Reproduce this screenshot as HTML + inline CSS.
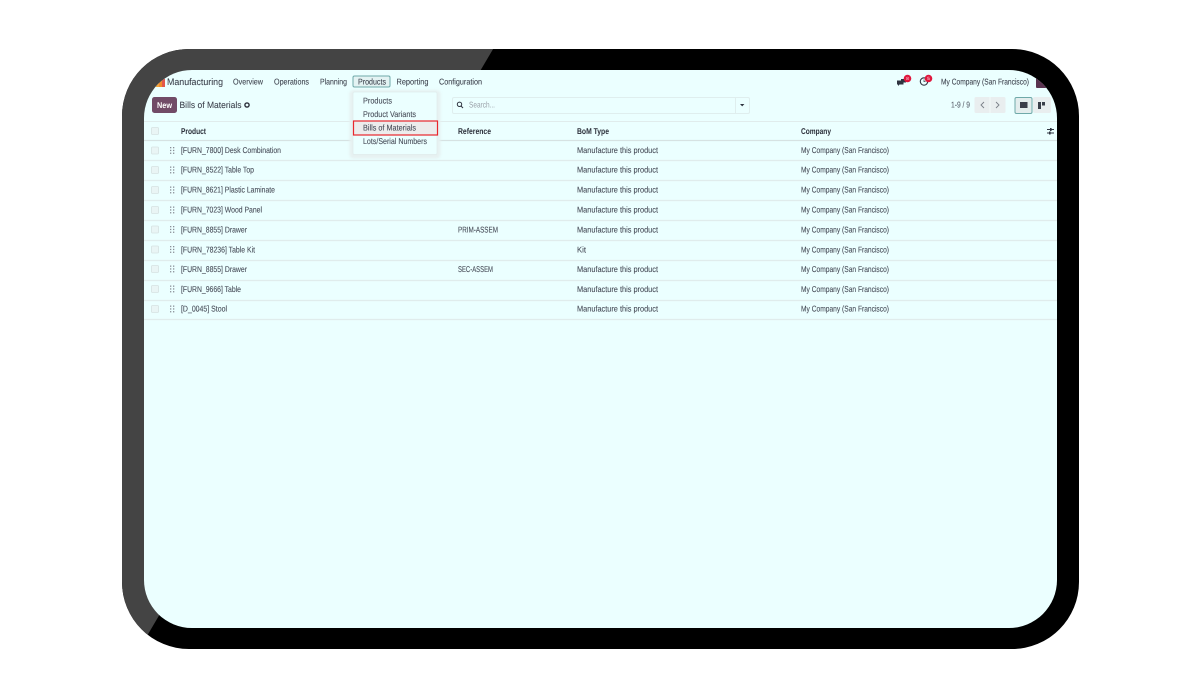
<!DOCTYPE html>
<html><head><meta charset="utf-8"><style>
html,body{margin:0;padding:0;background:#fff;width:1200px;height:697px;overflow:hidden}
svg{display:block}
text{font-family:"Liberation Sans",sans-serif;font-size:8.4px;fill:#454a56;stroke:#454a56;stroke-width:.08px}
.b{font-weight:bold;fill:#2b2f3a;stroke:none}
.m{fill:#3a3f4a}
.c{fill:#5f6570}
.soft{filter:blur(.25px)}
</style></head><body>
<svg width="1200" height="697" viewBox="0 0 1200 697" xmlns="http://www.w3.org/2000/svg" text-rendering="geometricPrecision">
<defs>
<clipPath id="sc"><rect x="144" y="70" width="913" height="558" rx="48"/></clipPath>
<clipPath id="fr"><rect x="122" y="49" width="957" height="600" rx="67"/></clipPath>
<pattern id="grip" width="3" height="2.600" patternUnits="userSpaceOnUse" x="170" y="0"><circle cx=".8" cy=".8" r=".65" fill="#8a8f97"/></pattern>
</defs>
<rect x="122" y="49" width="957" height="600" rx="67" fill="#000"/>
<polygon clip-path="url(#fr)" points="0,0 522,0 111,697 0,697" fill="#444"/>
<rect x="144" y="70" width="913" height="558" rx="48" fill="#ebffff"/>
<g clip-path="url(#sc)"><g class="soft">
<!-- logo -->
<rect x="156" y="81" width="3" height="6" fill="#f2a33a"/><rect x="159" y="80" width="3" height="7" fill="#f08a2c"/><rect x="162" y="79" width="3" height="8" fill="#e2574c"/>
<!-- navbar -->
<text x="167" y="85" textLength="56" lengthAdjust="spacingAndGlyphs" style="font-size:9.5px" class="m">Manufacturing</text>
<text x="233" y="84.700" textLength="30" lengthAdjust="spacingAndGlyphs" class="m">Overview</text>
<text x="274" y="84.700" textLength="35" lengthAdjust="spacingAndGlyphs" class="m">Operations</text>
<text x="320" y="84.700" textLength="27" lengthAdjust="spacingAndGlyphs" class="m">Planning</text>
<rect x="353" y="76" width="37" height="11" rx="1.500" fill="#e3f3f3" stroke="#6fa9a9" stroke-width="1"/>
<text x="358" y="84.700" textLength="28" lengthAdjust="spacingAndGlyphs" class="m">Products</text>
<text x="396.500" y="84.700" textLength="32" lengthAdjust="spacingAndGlyphs" class="m">Reporting</text>
<text x="439" y="84.700" textLength="43" lengthAdjust="spacingAndGlyphs" class="m">Configuration</text>
<!-- systray -->
<path d="M897 80.500h6.500v4h-4l-1.500 1.500v-1.500h-1z" fill="#2f3440"/><path d="M901 79h5v3.500h-5z" fill="#2f3440"/>
<circle cx="907.500" cy="78.500" r="3.800" fill="#e0173d"/>
<text x="906.300" y="80.200" style="font-size:4.500px;fill:#fff;stroke:none">8</text>
<circle cx="924" cy="81.500" r="3.700" fill="none" stroke="#2f3440" stroke-width="1.100"/><path d="M924 79.500v2.200h1.600" fill="none" stroke="#2f3440" stroke-width=".7"/>
<circle cx="928.500" cy="78.500" r="3.800" fill="#e0173d"/>
<text x="927.300" y="80.200" style="font-size:4.500px;fill:#fff;stroke:none">5</text>
<text x="941" y="84.700" textLength="88" lengthAdjust="spacingAndGlyphs" class="m">My Company (San Francisco)</text>
<rect x="1036" y="77" width="11" height="11" rx="1" fill="#5a3350"/><path d="M1037 78l8 5v-5z" fill="#e8c98a"/>
<!-- control panel -->
<rect x="152" y="97" width="25" height="16" rx="2.500" fill="#714b67"/>
<text x="157" y="108" textLength="15" lengthAdjust="spacingAndGlyphs" class="b" style="fill:#fff">New</text>
<text x="179.500" y="108" textLength="62" lengthAdjust="spacingAndGlyphs" style="font-size:9px" class="m">Bills of Materials</text>
<circle cx="247" cy="105" r="2.100" fill="none" stroke="#2b2f3a" stroke-width="1.400"/>
<!-- search -->
<rect x="452.500" y="97.500" width="297" height="16" rx="1.500" fill="#ebffff" stroke="#dfeeee"/>
<line x1="735.500" y1="98" x2="735.500" y2="113" stroke="#dfeeee"/>
<circle cx="459.500" cy="104.300" r="2.200" fill="none" stroke="#2f3440" stroke-width="1"/><path d="M461 106l2 2" stroke="#2f3440" stroke-width="1.100"/>
<text x="469" y="107.700" textLength="26" lengthAdjust="spacingAndGlyphs" style="fill:#9aa0a8;stroke:none">Search...</text>
<path d="M740 104h4.400l-2.200 2.400z" fill="#2f3440"/>
<!-- pager -->
<text x="951" y="107.700" textLength="19" lengthAdjust="spacingAndGlyphs" class="c">1-9 / 9</text>
<rect x="974.500" y="97" width="31" height="16" rx="1.500" fill="#e9eeef"/>
<line x1="990" y1="97" x2="990" y2="113" stroke="#f4fafa"/>
<path d="M984 102l-3 3 3 3M996 102l3 3-3 3" fill="none" stroke="#7b8088" stroke-width=".9"/>
<rect x="1033" y="97" width="18" height="16" rx="2" fill="#e9eeef"/>
<rect x="1015" y="97.500" width="17" height="16" rx="1.500" fill="#e3eded" stroke="#6fa9a9"/>
<rect x="1020" y="102" width="7.500" height="6" fill="#3a3f4a"/>
<rect x="1038" y="102" width="3" height="7" fill="#3a3f4a"/><rect x="1042" y="102" width="3" height="3.500" fill="#3a3f4a"/>
<!-- table -->
<g stroke="#e0ecec" stroke-width="1.300">
<line x1="144" x2="1057" y1="121.500" y2="121.500" stroke-width="1"/>
<line x1="144" x2="1057" y1="140.500" y2="140.500" stroke="#d6e2e2"/>
<line x1="144" x2="1057" y1="160.500" y2="160.500"/>
<line x1="144" x2="1057" y1="180.500" y2="180.500"/>
<line x1="144" x2="1057" y1="200.500" y2="200.500"/>
<line x1="144" x2="1057" y1="220.500" y2="220.500"/>
<line x1="144" x2="1057" y1="240.500" y2="240.500"/>
<line x1="144" x2="1057" y1="260.500" y2="260.500"/>
<line x1="144" x2="1057" y1="280.500" y2="280.500"/>
<line x1="144" x2="1057" y1="300.500" y2="300.500"/>
<line x1="144" x2="1057" y1="319.500" y2="319.500"/>
</g>
<g fill="#e9f5f5" stroke="#d6e2e2" stroke-width=".8">
<rect x="151.500" y="127.500" width="7" height="7" rx="1"/>
<rect x="151.500" y="147" width="7" height="7" rx="1"/>
<rect x="151.500" y="166.500" width="7" height="7" rx="1"/>
<rect x="151.500" y="186.500" width="7" height="7" rx="1"/>
<rect x="151.500" y="206.500" width="7" height="7" rx="1"/>
<rect x="151.500" y="226" width="7" height="7" rx="1"/>
<rect x="151.500" y="246" width="7" height="7" rx="1"/>
<rect x="151.500" y="265.500" width="7" height="7" rx="1"/>
<rect x="151.500" y="285.500" width="7" height="7" rx="1"/>
<rect x="151.500" y="305.500" width="7" height="7" rx="1"/>
</g>
<g fill="#8a8f97">
<rect x="170" y="147" width="1.300" height="1.300"/><rect x="173" y="147" width="1.300" height="1.300"/><rect x="170" y="149.800" width="1.300" height="1.300"/><rect x="173" y="149.800" width="1.300" height="1.300"/><rect x="170" y="152.600" width="1.300" height="1.300"/><rect x="173" y="152.600" width="1.300" height="1.300"/>
<rect x="170" y="166.500" width="1.300" height="1.300"/><rect x="173" y="166.500" width="1.300" height="1.300"/><rect x="170" y="169.300" width="1.300" height="1.300"/><rect x="173" y="169.300" width="1.300" height="1.300"/><rect x="170" y="172.100" width="1.300" height="1.300"/><rect x="173" y="172.100" width="1.300" height="1.300"/>
<rect x="170" y="186.500" width="1.300" height="1.300"/><rect x="173" y="186.500" width="1.300" height="1.300"/><rect x="170" y="189.300" width="1.300" height="1.300"/><rect x="173" y="189.300" width="1.300" height="1.300"/><rect x="170" y="192.100" width="1.300" height="1.300"/><rect x="173" y="192.100" width="1.300" height="1.300"/>
<rect x="170" y="206.500" width="1.300" height="1.300"/><rect x="173" y="206.500" width="1.300" height="1.300"/><rect x="170" y="209.300" width="1.300" height="1.300"/><rect x="173" y="209.300" width="1.300" height="1.300"/><rect x="170" y="212.100" width="1.300" height="1.300"/><rect x="173" y="212.100" width="1.300" height="1.300"/>
<rect x="170" y="226" width="1.300" height="1.300"/><rect x="173" y="226" width="1.300" height="1.300"/><rect x="170" y="228.800" width="1.300" height="1.300"/><rect x="173" y="228.800" width="1.300" height="1.300"/><rect x="170" y="231.600" width="1.300" height="1.300"/><rect x="173" y="231.600" width="1.300" height="1.300"/>
<rect x="170" y="246" width="1.300" height="1.300"/><rect x="173" y="246" width="1.300" height="1.300"/><rect x="170" y="248.800" width="1.300" height="1.300"/><rect x="173" y="248.800" width="1.300" height="1.300"/><rect x="170" y="251.600" width="1.300" height="1.300"/><rect x="173" y="251.600" width="1.300" height="1.300"/>
<rect x="170" y="265.500" width="1.300" height="1.300"/><rect x="173" y="265.500" width="1.300" height="1.300"/><rect x="170" y="268.300" width="1.300" height="1.300"/><rect x="173" y="268.300" width="1.300" height="1.300"/><rect x="170" y="271.100" width="1.300" height="1.300"/><rect x="173" y="271.100" width="1.300" height="1.300"/>
<rect x="170" y="285.500" width="1.300" height="1.300"/><rect x="173" y="285.500" width="1.300" height="1.300"/><rect x="170" y="288.300" width="1.300" height="1.300"/><rect x="173" y="288.300" width="1.300" height="1.300"/><rect x="170" y="291.100" width="1.300" height="1.300"/><rect x="173" y="291.100" width="1.300" height="1.300"/>
<rect x="170" y="305.500" width="1.300" height="1.300"/><rect x="173" y="305.500" width="1.300" height="1.300"/><rect x="170" y="308.300" width="1.300" height="1.300"/><rect x="173" y="308.300" width="1.300" height="1.300"/><rect x="170" y="311.100" width="1.300" height="1.300"/><rect x="173" y="311.100" width="1.300" height="1.300"/>
</g>
<text x="181" y="134" textLength="25" lengthAdjust="spacingAndGlyphs" class="b">Product</text>
<text x="458" y="134" textLength="33" lengthAdjust="spacingAndGlyphs" class="b">Reference</text>
<text x="577" y="134" textLength="32" lengthAdjust="spacingAndGlyphs" class="b">BoM Type</text>
<text x="801" y="134" textLength="30" lengthAdjust="spacingAndGlyphs" class="b">Company</text>
<path d="M1047 129.500h7M1047 133h7" stroke="#2f3440" stroke-width=".9"/><rect x="1050" y="128" width="1.600" height="3" fill="#2f3440"/><rect x="1049" y="131.500" width="1.600" height="3" fill="#2f3440"/>
<!-- rows -->
<text x="181" y="153" textLength="100" lengthAdjust="spacingAndGlyphs">[FURN_7800] Desk Combination</text>
<text x="181" y="172.700" textLength="73" lengthAdjust="spacingAndGlyphs">[FURN_8522] Table Top</text>
<text x="181" y="192.700" textLength="94" lengthAdjust="spacingAndGlyphs">[FURN_8621] Plastic Laminate</text>
<text x="181" y="212.700" textLength="81" lengthAdjust="spacingAndGlyphs">[FURN_7023] Wood Panel</text>
<text x="181" y="232.300" textLength="66" lengthAdjust="spacingAndGlyphs">[FURN_8855] Drawer</text>
<text x="181" y="252.300" textLength="74" lengthAdjust="spacingAndGlyphs">[FURN_78236] Table Kit</text>
<text x="181" y="271.800" textLength="66" lengthAdjust="spacingAndGlyphs">[FURN_8855] Drawer</text>
<text x="181" y="291.800" textLength="60" lengthAdjust="spacingAndGlyphs">[FURN_9666] Table</text>
<text x="181" y="311.700" textLength="46" lengthAdjust="spacingAndGlyphs">[D_0045] Stool</text>
<text x="458" y="232.300" textLength="40" lengthAdjust="spacingAndGlyphs">PRIM-ASSEM</text>
<text x="458" y="271.800" textLength="35" lengthAdjust="spacingAndGlyphs">SEC-ASSEM</text>
<text x="577" y="153" textLength="81" lengthAdjust="spacingAndGlyphs">Manufacture this product</text>
<text x="577" y="172.700" textLength="81" lengthAdjust="spacingAndGlyphs">Manufacture this product</text>
<text x="577" y="192.700" textLength="81" lengthAdjust="spacingAndGlyphs">Manufacture this product</text>
<text x="577" y="212.700" textLength="81" lengthAdjust="spacingAndGlyphs">Manufacture this product</text>
<text x="577" y="232.300" textLength="81" lengthAdjust="spacingAndGlyphs">Manufacture this product</text>
<text x="577" y="252.300" textLength="9" lengthAdjust="spacingAndGlyphs">Kit</text>
<text x="577" y="271.800" textLength="81" lengthAdjust="spacingAndGlyphs">Manufacture this product</text>
<text x="577" y="291.800" textLength="81" lengthAdjust="spacingAndGlyphs">Manufacture this product</text>
<text x="577" y="311.700" textLength="81" lengthAdjust="spacingAndGlyphs">Manufacture this product</text>
<text x="801" y="153" textLength="88" lengthAdjust="spacingAndGlyphs">My Company (San Francisco)</text>
<text x="801" y="172.700" textLength="88" lengthAdjust="spacingAndGlyphs">My Company (San Francisco)</text>
<text x="801" y="192.700" textLength="88" lengthAdjust="spacingAndGlyphs">My Company (San Francisco)</text>
<text x="801" y="212.700" textLength="88" lengthAdjust="spacingAndGlyphs">My Company (San Francisco)</text>
<text x="801" y="232.300" textLength="88" lengthAdjust="spacingAndGlyphs">My Company (San Francisco)</text>
<text x="801" y="252.300" textLength="88" lengthAdjust="spacingAndGlyphs">My Company (San Francisco)</text>
<text x="801" y="271.800" textLength="88" lengthAdjust="spacingAndGlyphs">My Company (San Francisco)</text>
<text x="801" y="291.800" textLength="88" lengthAdjust="spacingAndGlyphs">My Company (San Francisco)</text>
<text x="801" y="311.700" textLength="88" lengthAdjust="spacingAndGlyphs">My Company (San Francisco)</text>
<!-- dropdown -->
<rect x="349.500" y="90" width="91" height="68.500" rx="4" fill="#e6f1f1" style="filter:blur(1.2px)"/>
<rect x="353" y="92" width="84" height="62.500" rx="1.500" fill="#ebffff" stroke="#e0ecec" stroke-width=".7"/>
<rect x="353.500" y="121" width="84" height="14" fill="#ececec" stroke="#e8262c" stroke-width="1.200"/>
<text x="363" y="103.700" textLength="29" lengthAdjust="spacingAndGlyphs">Products</text>
<text x="363" y="117" textLength="53" lengthAdjust="spacingAndGlyphs">Product Variants</text>
<text x="363" y="130.500" textLength="53" lengthAdjust="spacingAndGlyphs">Bills of Materials</text>
<text x="363" y="143.800" textLength="64" lengthAdjust="spacingAndGlyphs">Lots/Serial Numbers</text>
</g></g>
</svg>
</body></html>
